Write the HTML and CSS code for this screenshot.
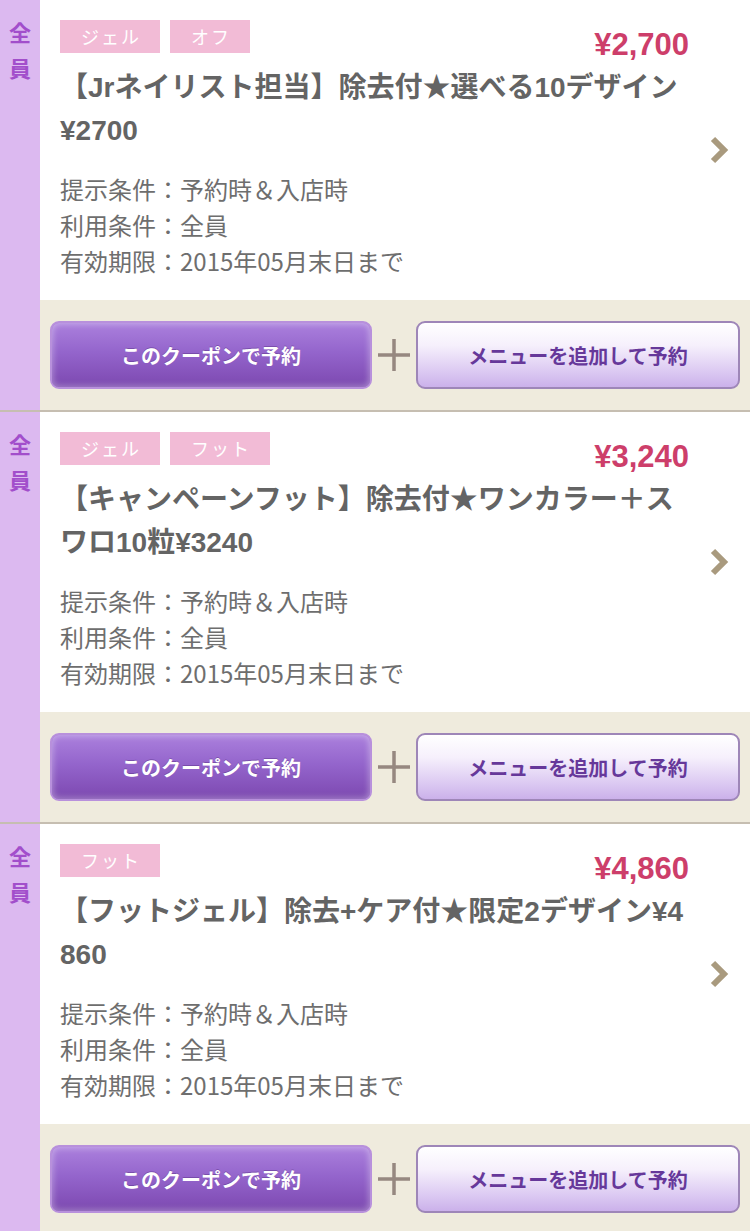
FILE: index.html
```html
<!DOCTYPE html>
<html lang="ja">
<head>
<meta charset="utf-8">
<title>クーポン</title>
<link rel="stylesheet" href="styles.css">
</head>
<body>
<div class="list">

  <section class="coupon">
    <div class="side"><span>全</span><span>員</span></div>
    <div class="main">
      <div class="info">
        <div class="body">
          <div class="head">
            <div class="tags"><span class="tag">ジェル</span><span class="tag">オフ</span></div>
            <div class="price">¥2,700</div>
          </div>
          <h2 class="title">【Jrネイリスト担当】除去付★選べる10デザイン¥2700</h2>
          <div class="conds">
            <p>提示条件：予約時＆入店時</p>
            <p>利用条件：全員</p>
            <p>有効期限：2015年05月末日まで</p>
          </div>
        </div>
        <div class="arrow">
          <svg width="20" height="30" viewBox="0 0 20 30"><path d="M3 4 L14 15 L3 26" fill="none" stroke="#a99a7e" stroke-width="6"/></svg>
        </div>
      </div>
      <div class="actions">
        <button class="btn btn-primary">このクーポンで予約</button>
        <span class="plus"><svg width="32" height="32" viewBox="0 0 32 32"><path d="M0 16 H32 M16 0 V32" stroke="#968880" stroke-width="3.5"/></svg></span>
        <button class="btn btn-secondary">メニューを追加して予約</button>
      </div>
    </div>
  </section>

  <section class="coupon">
    <div class="side"><span>全</span><span>員</span></div>
    <div class="main">
      <div class="info">
        <div class="body">
          <div class="head">
            <div class="tags"><span class="tag">ジェル</span><span class="tag">フット</span></div>
            <div class="price">¥3,240</div>
          </div>
          <h2 class="title">【キャンペーンフット】除去付★ワンカラー＋スワロ10粒¥3240</h2>
          <div class="conds">
            <p>提示条件：予約時＆入店時</p>
            <p>利用条件：全員</p>
            <p>有効期限：2015年05月末日まで</p>
          </div>
        </div>
        <div class="arrow">
          <svg width="20" height="30" viewBox="0 0 20 30"><path d="M3 4 L14 15 L3 26" fill="none" stroke="#a99a7e" stroke-width="6"/></svg>
        </div>
      </div>
      <div class="actions">
        <button class="btn btn-primary">このクーポンで予約</button>
        <span class="plus"><svg width="32" height="32" viewBox="0 0 32 32"><path d="M0 16 H32 M16 0 V32" stroke="#968880" stroke-width="3.5"/></svg></span>
        <button class="btn btn-secondary">メニューを追加して予約</button>
      </div>
    </div>
  </section>

  <section class="coupon">
    <div class="side"><span>全</span><span>員</span></div>
    <div class="main">
      <div class="info">
        <div class="body">
          <div class="head">
            <div class="tags"><span class="tag">フット</span></div>
            <div class="price">¥4,860</div>
          </div>
          <h2 class="title">【フットジェル】除去+ケア付★限定2デザイン¥4860</h2>
          <div class="conds">
            <p>提示条件：予約時＆入店時</p>
            <p>利用条件：全員</p>
            <p>有効期限：2015年05月末日まで</p>
          </div>
        </div>
        <div class="arrow">
          <svg width="20" height="30" viewBox="0 0 20 30"><path d="M3 4 L14 15 L3 26" fill="none" stroke="#a99a7e" stroke-width="6"/></svg>
        </div>
      </div>
      <div class="actions">
        <button class="btn btn-primary">このクーポンで予約</button>
        <span class="plus"><svg width="32" height="32" viewBox="0 0 32 32"><path d="M0 16 H32 M16 0 V32" stroke="#968880" stroke-width="3.5"/></svg></span>
        <button class="btn btn-secondary">メニューを追加して予約</button>
      </div>
    </div>
  </section>

</div>
</body>
</html>
```

FILE: styles.css
```css
* { box-sizing: border-box; }

html, body {
  margin: 0;
  padding: 0;
  background: #ffffff;
}

body {
  font-family: "Liberation Sans", "Noto Sans CJK JP", sans-serif;
  width: 750px;
  overflow: hidden;
}

.list {
  display: flex;
  flex-direction: column;
}

.coupon {
  display: grid;
  grid-template-columns: 40px 1fr;
  border-bottom: 2px solid #c6beb1;
}

.side {
  background: #dcb9f0;
  display: flex;
  flex-direction: column;
  align-items: center;
  padding-top: 13px;
  font-family: "Noto Sans CJK JP", sans-serif;
  font-weight: 700;
  font-size: 22px;
  line-height: 36px;
  color: #a24ecb;
}

.main {
  display: flex;
  flex-direction: column;
}

.info {
  display: flex;
  background: #ffffff;
  padding: 20px 0 21px 20px;
}

.body {
  width: 630px;
}

.head {
  display: flex;
  justify-content: space-between;
  align-items: flex-start;
}

.tags {
  display: flex;
  gap: 10px;
}

.tag {
  display: block;
  height: 33px;
  line-height: 33px;
  padding: 0 19px 0 21px;
  letter-spacing: 2px;
  background: #f2bbd6;
  color: #ffffff;
  font-family: "Noto Sans CJK JP", sans-serif;
  font-size: 18px;
  font-weight: 400;
}

.price {
  font-family: "Liberation Sans", sans-serif;
  font-weight: 700;
  font-size: 31px;
  line-height: 33px;
  color: #cd3e6a;
  margin-top: 8px;
  margin-bottom: -8px;
  padding-right: 1px;
}

.title {
  margin: 13px 0 0 0;
  font-size: 28px;
  font-weight: 700;
  line-height: 43px;
  color: #646464;
  word-break: break-all;
}

.conds {
  margin-top: 19px;
  font-family: "Noto Sans CJK JP", sans-serif;
  font-size: 24px;
  line-height: 36px;
  color: #6e6e6e;
}

.conds p {
  margin: 0;
}

.arrow {
  flex: 1;
  display: flex;
  align-items: center;
  justify-content: center;
}

.arrow svg { display: block; }

.actions {
  background: #efebdd;
  padding: 21px 10px;
  display: grid;
  grid-template-columns: 322px 44px 1fr;
  align-items: center;
}

.plus {
  display: flex;
  justify-content: center;
}

.plus svg { display: block; }

.btn {
  height: 68px;
  border-radius: 9px;
  font-family: "Noto Sans CJK JP", sans-serif;
  font-weight: 700;
  font-size: 20px;
  padding: 0;
  cursor: pointer;
}

.btn-primary {
  border: 2px solid #b890dc;
  color: #ffffff;
  background: linear-gradient(#ab80dd 0%, #9465cc 45%, #8350b8 85%, #7b4aae 100%);
  box-shadow: inset 0 0 6px 1px rgba(255, 255, 255, 0.35);
  text-shadow: 0 -1px 0 rgba(70, 30, 110, 0.35);
}

.btn-secondary {
  border: 2px solid #9e86b8;
  color: #66389a;
  background: linear-gradient(#ffffff 0%, #f6f0fc 35%, #dccaf2 75%, #cbb1ea 100%);
}
```
